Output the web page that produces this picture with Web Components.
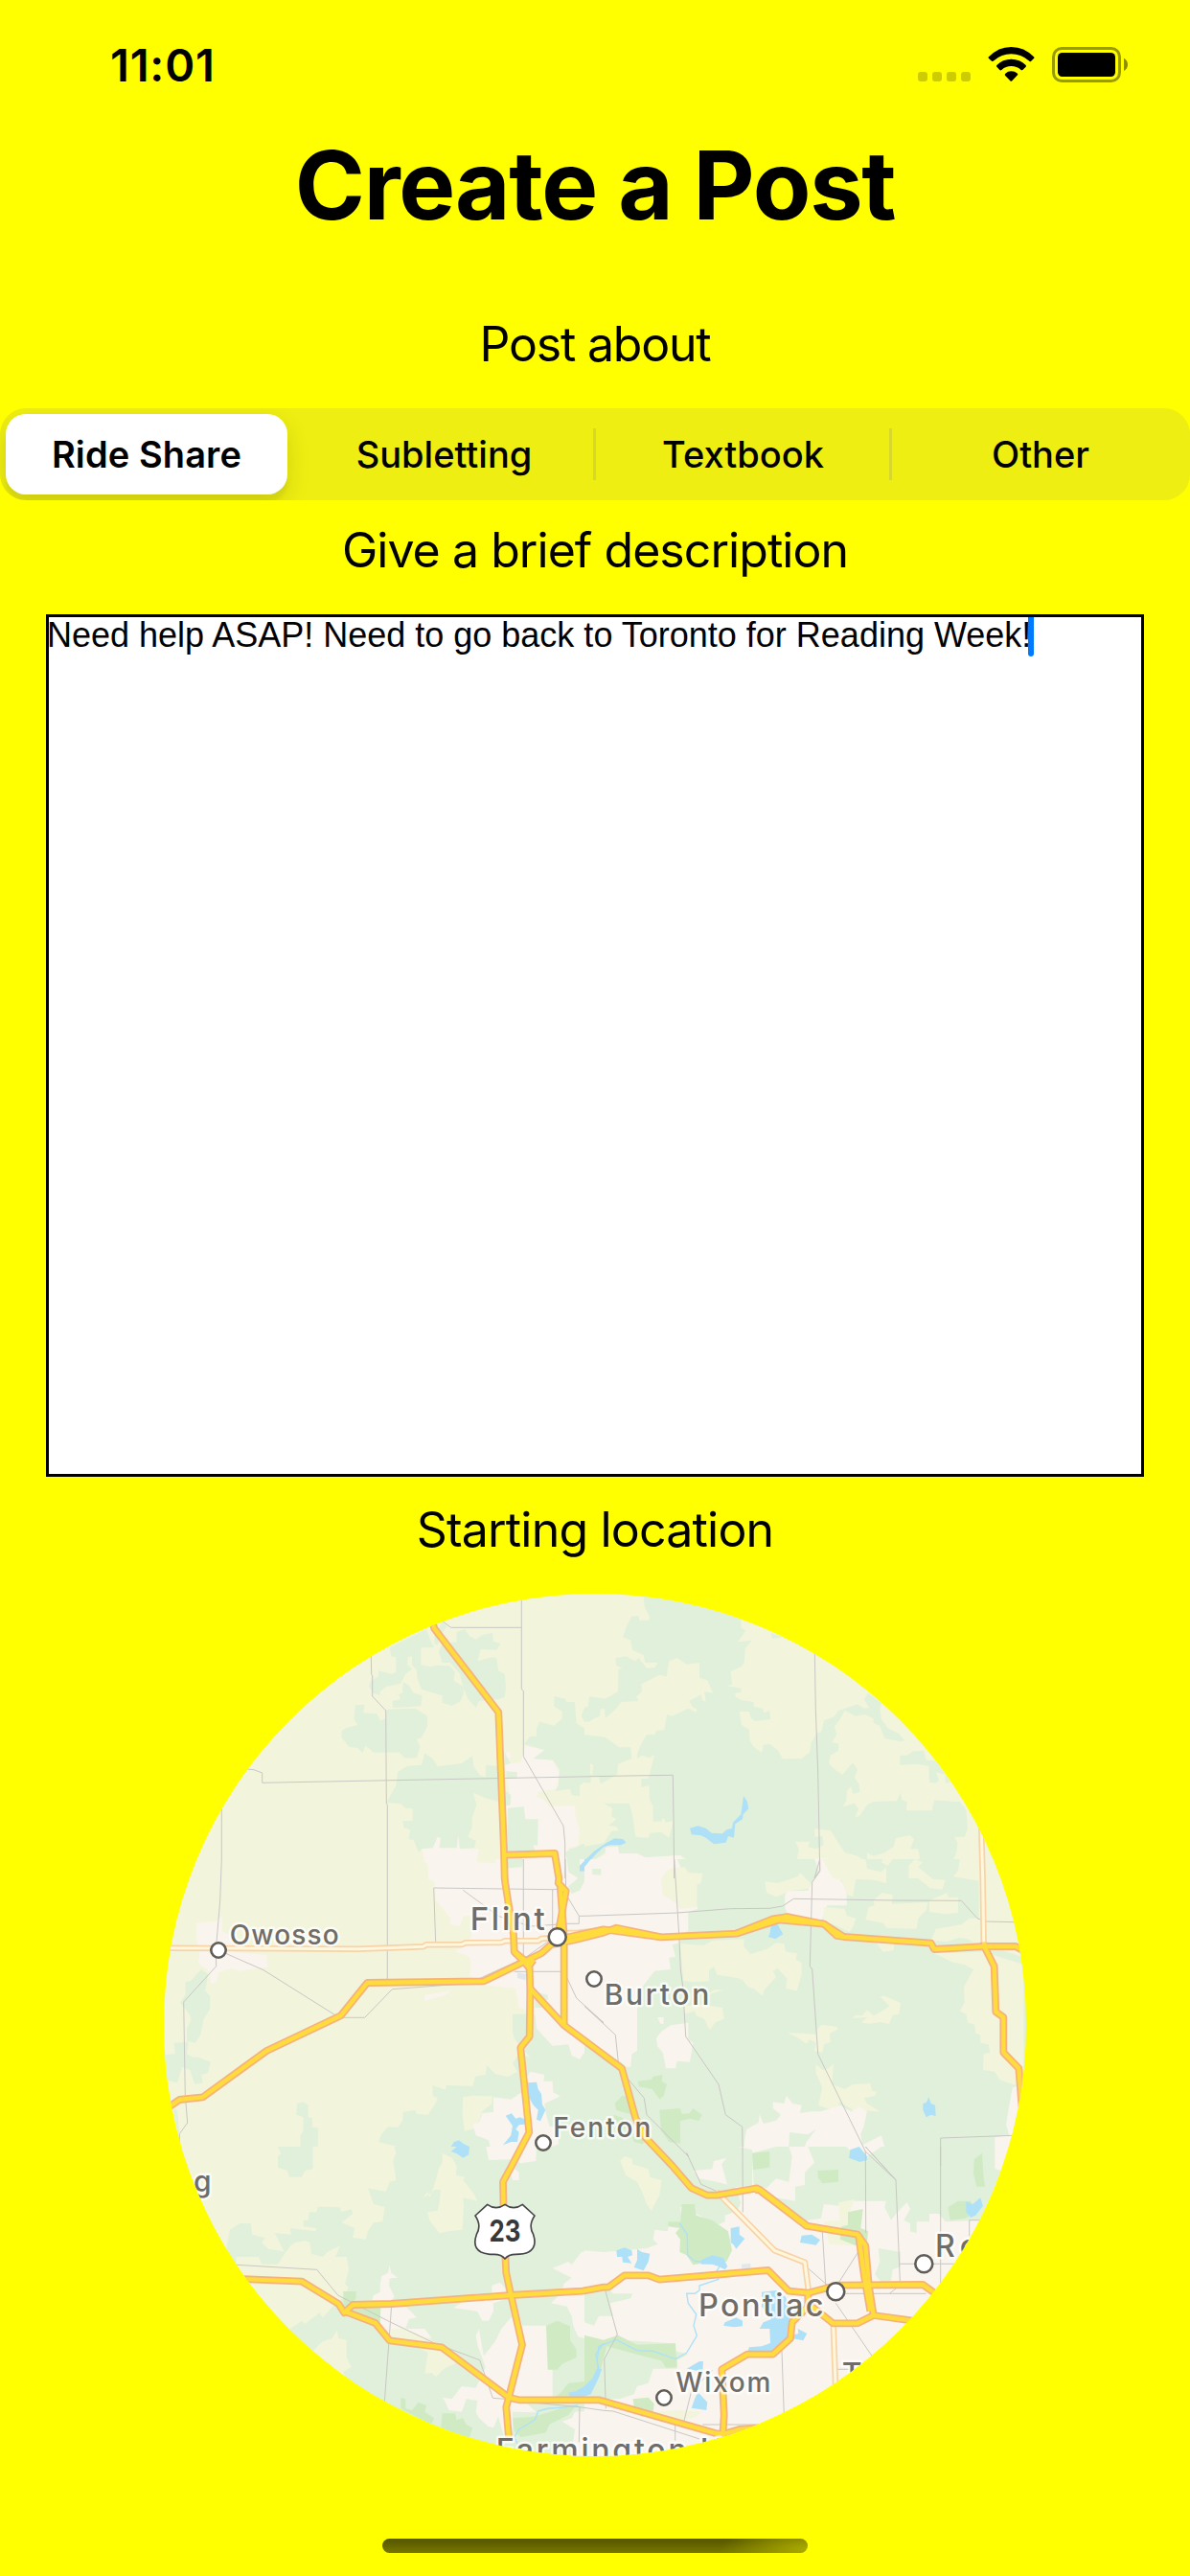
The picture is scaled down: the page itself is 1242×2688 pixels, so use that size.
<!DOCTYPE html>
<html lang="en">
<head>
<meta charset="utf-8">
<title>Create a Post</title>
<style>
html,body{margin:0;padding:0;background:#ff0}
body{width:1242px;height:2688px;overflow:hidden;font-family:Inter,"Liberation Sans",sans-serif;color:#000}
</style>
</head>
<body>
<post-screen></post-screen>
<script>
const define = (name, html, setup) => customElements.define(name, class extends HTMLElement {
  constructor() {
    super();
    const t = document.createElement('template');
    t.innerHTML = html;
    this.attachShadow({mode: 'open'}).appendChild(t.content.cloneNode(true));
  }
  connectedCallback() { if (setup) setup(this, this.shadowRoot); }
});

define('status-bar', `
<style>
:host{display:flex;justify-content:space-between;align-items:flex-start;height:136px;box-sizing:border-box;padding:38px 65px 0 115px}
.time{font-size:47px;line-height:60px;font-weight:600;letter-spacing:.8px}
svg{display:block;margin-top:11px}
</style>
<span class="time"><slot></slot></span>
<svg width="219" height="37" viewBox="958 49 219 37">
 <g fill="#cc0"><rect x="958" y="75" width="10" height="10" rx="3"/><rect x="973" y="75" width="10" height="10" rx="3"/><rect x="988" y="75" width="10" height="10" rx="3"/><rect x="1003" y="75" width="10" height="10" rx="3"/></g>
 <g transform="translate(900 20) scale(.33333)">
  <path d="M396 118 Q426 87 466 87 Q507 87 537 118 Q540 121 537 123 L528 132 Q525 134 521 130 Q497 109 466 109 Q436 109 412 130 Q408 134 405 131 L396 123 Q393 120 396 118Z"/>
  <path d="M421 144 Q440 125 466 125 Q493 125 512 144 Q514 147 512 149 L502 159 Q499 161 496 158 Q484 147 466 147 Q449 147 437 158 Q433 162 430 159 L421 149 Q419 147 421 144Z"/>
  <path d="M448 170 Q456 163 466 163 Q478 163 486 170 Q488 173 486 175 L469 193 Q466 196 463 193 L447 176 Q445 173 448 170Z"/>
  <rect x="598.500" y="91.500" width="207" height="102" rx="26" fill="none" stroke="#000" stroke-opacity=".4" stroke-width="9"/>
  <rect x="612" y="105" width="180" height="75" rx="14"/>
  <path d="M819 122 Q831 129 831 142 Q831 156 819 162Z" fill-opacity=".45"/>
 </g>
</svg>`);

define('screen-title', `
<style>:host{display:block;text-align:center;font-size:99px;line-height:120px;font-weight:700;letter-spacing:-1.25px}</style><slot></slot>`);

define('field-label', `
<style>:host{display:block;text-align:center;font-size:50px;line-height:60px;letter-spacing:-.95px}</style><slot></slot>`);

define('segment-item', `
<style>
:host{display:flex;flex:1;height:84px;align-items:center;justify-content:center;font-size:38px;font-weight:450;border-radius:21px;box-sizing:border-box}
:host([divided])::after{content:"";width:3px;height:54px;background:#d8d82a;position:absolute;right:-1px;top:15px}
:host([divided]){position:relative}
:host([selected]){flex:none;width:294px;margin-right:6px;letter-spacing:.1px;background:#fff;font-weight:600;box-shadow:0 9px 24px rgba(0,0,0,.12),0 9px 3px rgba(0,0,0,.04)}
:host(.w2){flex:none;width:315px}
:host(.w3){flex:none;width:309px}
</style><slot></slot>`);

define('segmented-control', `
<style>:host{display:flex;height:96px;box-sizing:border-box;padding:6px 0 6px 6px;background:#eeee12;border-radius:27px;overflow:hidden}</style><slot></slot>`);

define('text-box', `
<style>
:host{display:flex;box-sizing:border-box;width:1146px;height:900px;margin:0 auto;border:3px solid #000;background:#fff;font:36px/38px "Liberation Sans",Arial,sans-serif}
.t{margin-left:-2px;white-space:pre}
i{width:6px;height:41px;background:#007aff;border-radius:0 0 3px 3px;margin-left:-3px}
</style><span class="t"><slot></slot></span><i></i>`);

define('home-indicator', `
<style>:host{display:block;width:444px;height:15px;margin:0 auto;border-radius:8px;background:radial-gradient(ellipse 90px 30px at 100% 75%,#aaaa00,rgba(170,170,0,0)),linear-gradient(#545400,#787800)}</style>`);

/* Map geometry: each region letter sets the origin of a grid with a third-of-a-pixel unit. */
const ORIGIN = {A:[160,1650,1350,870],B:[610,1650,1440,870],C:[160,1940,1350,900],D:[610,1940,1440,900],E:[160,2240,1350,1020],F:[610,2240,1440,1020]};
const pts = s => {
  let o = ORIGIN.A, out = [];
  for (const k of s.trim().split(/\s+/)) {
    if (ORIGIN[k]) { o = ORIGIN[k]; continue; }
    const [x, y] = k.split(',').map(Number);
    out.push((o[0] + x / 3).toFixed(1) + ',' + (o[1] + y / 3).toFixed(1));
  }
  return out.join(' ');
};
const G='#e1f0da', Y='#f3f4dc', U='#f9f4ed', P='#d0ebc4', W='#aee1f8', I='#e2e7ea';
const LAND = {
A:[[Y,'0,0 1350,0 1350,870 0,870'],
[G,'740,207 855,150 868,185 880,208 838,208 838,262 870,268 885,263 928,265 945,285 940,310 970,330 972,350 962,375 935,390 905,380 905,358 860,345 840,338 825,300 825,280 810,262 810,235 797,237 795,260 810,275 790,290 775,320 730,330 710,345 710,358 688,350 675,330 680,312 705,298 705,280 745,290 760,285 760,238 745,235'],
[G,'880,163 905,128 920,142 905,160 890,200 880,195'],
[G,'950,160 975,150 990,172 1010,182 1030,168 1062,162 1065,188 1088,195 1075,215 1025,213 1015,250 1060,238 1075,240 1080,280 1100,290 1104,330 1100,362 1080,370 1050,372 1020,375 1010,395 985,368 970,330 960,290 930,255 905,255 893,220 905,195 950,190'],
[G,'782,315 800,325 815,350 842,358 838,390 775,395 750,395 748,375 775,370 768,355 780,350'],
[G,'632,388 662,386 658,412 700,415 710,435 725,432 730,402 765,400 820,398 858,422 858,455 840,490 825,495 835,518 825,552 790,554 770,536 690,536 665,515 655,537 640,522 612,518 590,490 590,468 605,458 640,450 628,432'],
[G,'765,598 795,578 840,575 850,538 875,555 890,580 965,570 1000,546 1003,580 1025,610 1040,612 1042,575 1085,580 1090,692 1045,680 1002,662 1012,700 998,742 998,770 985,800 1010,812 1005,835 960,838 840,840 830,848 815,810 800,808 805,778 785,772 780,750 812,750 812,712 790,710 775,697 730,693 745,665 760,640'],
[U,'1100,575 1120,570 1150,568 1165,515 1225,530 1210,545 1190,555 1250,560 1272,600 1262,650 1205,660 1200,675 1220,680 1240,705 1320,703 1322,735 1335,775 1330,828 1300,835 1295,870 850,870 840,838 875,835 890,800 900,805 895,835 950,835 955,795 960,838 1020,838 1012,880 1090,880 1085,690 1120,700'],
[U,'1103,535 1118,535 1118,555 1103,550'],
[G,'1105,595 1140,598 1138,615 1105,618'],[G,'1100,535 1118,570 1100,575'],[G,'1090,645 1120,670 1118,700 1095,705'],
[G,'1110,710 1160,706 1165,745 1205,745 1203,828 1190,825 1195,845 1110,848'],[G,'1105,868 1155,866 1155,870 1105,870'],
[G,'1160,510 1180,485 1200,485 1200,460 1210,440 1255,452 1280,430 1280,408 1255,392 1255,360 1290,368 1295,378 1320,378 1325,445 1352,462 1360,620 1335,640 1335,672 1310,670 1305,650 1258,657 1268,640 1272,590 1252,560 1190,555 1225,528'],
[G,'1365,360 1410,370 1410,395 1385,400 1375,440 1350,442 1340,420 1348,400 1366,395'],
[G,'1305,838 1320,835 1345,822 1410,825 1410,870 1295,870 1290,850'],
[W,'1410,828 1370,855 1335,885 1335,908 1350,900 1370,875 1410,848']],
B:[[Y,'0,0 1440,0 1440,870 0,870'],
[G,'185,47 250,50 400,85 490,118 490,145 505,155 480,190 525,185 503,210 500,255 490,268 458,282 462,322 448,328 492,335 490,348 472,350 472,362 492,372 530,378 530,392 558,398 562,412 580,405 583,432 535,438 522,430 515,408 485,408 492,450 515,463 518,500 530,518 555,537 560,512 580,510 605,528 620,556 680,555 705,535 710,505 728,475 742,472 750,435 780,425 795,405 855,385 875,398 892,395 875,370 888,350 930,382 925,400 930,432 950,460 985,478 1002,498 990,502 940,492 925,452 905,445 905,430 878,418 848,422 815,405 800,432 783,455 790,480 775,505 795,508 795,530 770,545 765,570 785,590 808,605 840,568 855,590 845,615 860,635 862,660 840,665 835,642 822,655 820,688 808,706 845,695 858,712 848,738 862,735 885,700 905,690 978,688 990,660 993,685 1010,690 1008,718 1088,718 1095,685 1160,690 1175,690 1195,715 1200,775 1190,800 1158,800 1168,818 1165,850 1155,870 1050,870 1045,838 1020,838 1032,808 1020,795 975,805 968,830 940,850 905,860 885,850 885,880 855,860 815,850 770,780 720,775 722,800 745,797 750,825 725,838 700,832 705,815 660,815 672,840 665,870 320,870 300,858 190,865 165,852 108,855 105,830 70,830 65,850 35,870 0,870 0,830 60,820 85,782 108,780 100,768 75,765 100,745 85,735 88,710 60,695 140,695 150,730 160,800 200,803 205,788 240,785 265,803 278,750 255,755 248,740 240,752 215,752 215,705 203,682 203,640 178,645 178,618 200,618 215,560 218,542 205,553 180,545 165,555 165,540 180,505 195,480 220,480 225,468 250,465 258,418 275,422 325,398 350,410 352,400 340,395 328,375 365,355 370,375 380,375 375,345 402,350 385,310 360,303 360,255 320,260 290,240 265,250 257,298 235,293 178,322 180,345 162,362 170,375 115,378 100,398 65,430 62,398 50,400 48,422 25,432 15,440 0,440 0,395 12,392 15,360 65,368 105,345 106,275 120,272 100,265 97,240 130,235 160,250 170,240 195,272 220,270 230,255 190,255 185,232 150,215 145,185 120,175 132,140 148,110 170,108 172,122 200,122 205,112 188,80'],
[G,'0,480 65,488 108,520 145,520 148,555 105,572 102,605 50,635 45,612 20,610 20,632 0,630'],
[Y,'18,570 28,575 25,605 18,605'],
[G,'585,162 620,175 588,180'],
[G,'988,545 1010,545 1030,532 1062,530 1070,560 1100,562 1140,620 1145,630 1130,632 1130,605 1102,598 1110,625 1100,632 1080,630 1078,578 1040,572 988,575'],
[U,'35,870 65,855 65,835 105,830 108,852 165,852 190,865 300,858 325,890 320,900 0,900'],
[U,'715,880 725,868 765,868 780,900 715,900'],
[W,'70,818 95,805 122,808 130,818 115,826 80,826 60,832 35,855 0,895 0,875 30,845'],
[W,'330,773 355,766 380,773 398,788 432,790 445,778 462,773 465,755 490,730 498,672 510,690 514,712 497,730 495,745 472,760 468,803 450,798 443,818 405,823 380,803 365,796 335,793']],
C:[[Y,'0,0 1350,0 1350,900 0,900'],
[U,'845,0 860,20 860,62 880,70 885,130 915,165 930,185 930,205 960,210 970,180 995,175 995,240 990,255 945,290 990,305 995,330 990,365 1040,385 1010,400 935,410 915,425 850,443 850,425 1035,395 1135,405 1145,465 1165,470 1170,485 1195,485 1200,530 1250,585 1300,580 1300,612 1335,627 1410,620 1410,0'],
[Y,'1015,0 1070,0 1070,12 1015,10'],[G,'1110,0 1158,0 1155,25 1110,28'],
[U,'135,200 195,195 215,178 215,225 245,240 250,290 355,300 358,338 300,345 270,350 245,342 205,355 198,385 180,388 175,350 140,325 145,300 135,250'],
[G,'1295,0 1410,0 1410,60 1375,50 1360,50 1335,98 1310,108 1300,85 1330,60 1300,40'],[U,'1335,0 1350,0 1350,40 1335,38'],
[W,'1335,20 1355,0 1370,0 1350,38 1335,38'],
[G,'1195,415 1235,425 1235,440 1220,440 1230,465 1195,465'],[I,'1140,355 1168,360 1165,378 1140,372'],
[G,'150,345 172,360 163,412 178,430 177,470 158,500 148,550 132,575 105,570 105,530 118,505 115,488 85,450 100,425 100,385 118,380'],
[G,'65,575 110,572 105,610 125,620 142,620 180,635 170,670 150,675 155,700 130,705 115,660 90,650 75,700 40,692 35,612 68,610'],
[G,'62,780 75,785 82,860 75,850'],
[G,'450,765 470,760 485,770 485,808 498,810 498,838 517,842 515,900 400,900 460,905 460,865 470,850 470,808 448,800'],
[G,'765,900 705,885 715,860 735,838 765,840 780,820 782,792 820,785 825,798 860,800 885,762 890,748 875,740 875,708 915,722 918,708 1000,710 1008,680 1040,675 1045,645 1070,672 1110,682 1140,665 1125,640 1145,610 1180,620 1140,575 1130,560 1125,540 1125,485 1165,485 1195,490 1200,530 1250,585 1300,580 1310,615 1335,627 1350,605 1350,900'],
[Y,'970,745 1000,740 1062,742 1060,765 1030,790 1020,820 1015,840 975,852 968,800'],
[U,'1000,830 1020,825 1030,795 1065,792 1065,745 1120,752 1145,735 1160,730 1165,690 1180,665 1225,675 1222,695 1250,695 1252,730 1275,742 1225,765 1228,788 1240,835 1260,840 1270,890 1250,900 1055,900 1050,880 1010,865'],
[W,'1168,700 1200,698 1205,720 1215,735 1218,768 1228,785 1212,820 1200,815 1205,785 1190,770 1175,745'],
[W,'1103,803 1122,796 1135,812 1148,808 1165,815 1165,830 1145,832 1135,845 1145,855 1140,885 1120,885 1095,895 1120,865 1125,835'],
[W,'942,885 958,880 970,890 990,900 970,900 932,900']],
D:[[G,'0,0 1440,0 1440,900 0,900'],
[U,'0,0 290,0 330,90 355,155 325,165 325,225 298,235 298,262 275,268 285,305 265,308 270,345 220,350 165,420 165,600 148,610 145,650 130,650 115,635 0,570'],
[G,'218,380 240,375 275,350 298,345 310,400 250,420 165,490 180,420 218,405'],
[G,'25,30 52,30 52,50 25,48'],[W,'0,0 20,0 0,25'],
[Y,'275,28 315,25 325,42 370,45 365,75 352,80 352,150 300,155 285,138 245,110 240,65 255,38'],
[Y,'565,70 605,75 668,55 675,42 708,75 705,92 650,98 600,118 570,105'],
[U,'627,115 635,100 700,98 712,75 735,40 720,0 775,0 800,65 820,90 822,145 760,145 740,200 700,205 638,180 628,150'],
[Y,'745,0 880,0 885,30 930,40 945,25 945,75 905,65 850,62 840,118 822,110 805,65 778,60'],
[Y,'935,0 965,0 950,20 930,10'],[Y,'1015,20 1035,0 1058,10 1045,25 1090,62 1130,65 1120,95 1082,90 1045,60 1015,60'],
[Y,'1155,55 1170,35 1175,0 1440,0 1440,330 1250,265 1235,270 1200,250 1175,245 1135,258 1085,255 1100,218 1180,205 1205,185 1235,185 1235,68'],
[Y,'890,150 908,145 905,128 932,105 965,112 962,140 1075,135 1070,160 1045,185 1040,218 945,215 935,200 880,190'],
[Y,'750,150 815,155 822,178 850,185 842,210 830,228 748,190'],
[Y,'1080,130 1135,105 1140,120 1170,120 1170,168 1130,172 1080,165'],
[Y,'912,260 970,258 968,285 935,290'],
[Y,'300,265 375,270 400,255 500,250 498,272 520,298 570,282 600,262 625,265 630,290 665,295 662,315 680,325 680,360 665,412 630,405 635,375 605,342 590,350 600,370 578,392 562,410 558,428 530,405 512,400 495,378 480,372 415,362 405,335 390,348 390,382 340,385 310,380'],
[W,'580,235 585,205 605,205 622,235 598,250 575,243'],
[Y,'310,460 370,455 432,465 437,500 410,510 392,535 375,500 350,490 345,475 312,485'],
[Y,'375,430 408,408 435,410 400,420'],
[Y,'1095,295 1250,290 1375,330 1375,710 1340,705 1300,690 1285,665 1248,660 1250,610 1270,605 1265,580 1240,575 1240,550 1225,545 1222,518 1200,512 1195,485 1175,475 1190,450 1188,400 1218,345 1190,330 1150,322'],
[Y,'925,430 940,428 990,450 985,485 965,488 955,515 925,510 895,515 868,512 885,495 838,498 850,488 870,490 885,472 905,490 925,480 955,460'],
[Y,'635,542 725,548 730,530 742,518 793,525 790,535 768,545 770,572 750,580 745,605 720,600 725,575 705,565 695,578 670,560'],
[Y,'725,642 745,660 765,655 780,640 775,705 815,720 840,705 895,702 900,725 915,728 910,740 875,748 885,765 925,790 840,785 800,760 785,790 732,770 745,715 725,670'],
[U,'228,495 248,495 248,515 238,515'],[U,'225,560 240,540 270,520 325,512 325,565 340,575 330,635 290,632 285,655 255,655 245,605 228,585'],
[P,'167,695 210,690 215,680 245,675 242,695 258,705 248,740 235,752 212,720 170,712'],
[P,'95,765 118,740 150,745 160,800 130,795 100,785'],[P,'90,800 120,810 130,840 115,850'],
[P,'235,785 300,780 305,798 330,795 340,780 368,800 358,820 330,812 300,820 300,890 265,885 240,850'],
[P,'150,870 210,870 180,892 155,885'],
[U,'500,885 508,845 545,825 548,798 560,828 600,818 615,800 590,780 590,760 625,765 632,740 652,765 680,770 675,795 710,790 740,790 800,770 835,790 860,775 885,790 875,835 865,860 870,895 930,865 940,900 500,900'],
[G,'640,900 642,855 700,862 725,845 695,885 690,900'],
[U,'1340,715 1390,700 1390,900 1285,900 1285,870 1330,865 1320,830 1330,770'],
[W,'1060,765 1070,762 1078,745 1085,765 1098,770 1100,805 1085,800 1070,808 1060,785']],
E:[[G,'0,0 1350,0 1350,1020 0,1020'],
[Y,'0,0 390,0 400,20 390,30 390,65 420,75 425,95 465,95 475,75 500,70 500,0 755,0 760,20 750,45 755,70 760,105 740,110 728,140 672,130 690,180 725,190 718,235 690,238 672,265 665,290 625,285 630,255 590,238 625,210 620,195 588,205 585,190 515,188 510,205 488,205 485,230 470,230 470,250 510,255 508,265 428,255 432,275 380,270 390,290 400,310 410,328 360,320 340,300 350,285 310,275 305,240 270,240 240,260 230,310 230,350 290,410 0,410'],
[Y,'260,345 330,345 340,368 390,368 415,330 430,310 445,300 475,295 490,300 495,335 530,345 545,330 585,310 570,345 605,345 612,385 600,430 610,440 600,470 575,485 545,520 530,535 520,520 475,555 465,545 415,580 260,430'],
[Y,'500,640 530,610 560,600 575,575 580,600 605,605 605,660 620,690 595,705 600,720'],
[Y,'845,160 858,140 865,160 880,120 895,65 905,50 905,20 935,35 950,60 948,90 975,95 970,105 990,130 1005,150 1015,170 970,160 972,190 968,260 925,265 895,270 865,230 858,205 890,200 895,180 900,135 880,135 870,145'],
[U,'1042,0 1200,0 1198,45 1150,52 1130,40 1050,42'],[W,'932,15 950,0 990,0 988,25 970,35 950,22'],
[U,'1118,85 1130,68 1145,80 1145,105 1125,105'],
[U,'710,430 715,405 735,395 740,372 745,395 765,410 740,412 738,435 755,470 735,490 685,480 690,465 710,455'],
[U,'710,490 780,490 825,535 800,540 790,570 850,570 872,600 720,590 708,570'],
[Y,'725,575 780,568 860,600 920,635 950,655 945,680 920,690 905,700 885,720 872,708 850,710 860,645 800,615 735,605'],
[U,'940,505 975,480 1005,480 1010,460 1060,460 1060,435 1085,425 1100,440 1110,475 1065,490 1065,515 1050,545 1030,545 1015,515'],
[U,'1020,570 1030,630 1035,655 1070,610 1090,570 1120,535 1150,540 1155,560 1230,560 1235,600 1250,690 1250,785 1150,785 1200,832 1125,830 1125,880 1120,910 1100,915 1080,845 1065,880 1048,875 1020,850 1010,830 1015,795 980,790 970,820 965,830 925,825 915,800 905,785 935,790 965,750 1010,755 1040,690 1015,620 1010,590'],
[U,'1250,380 1300,360 1310,370 1340,330 1410,320 1410,600 1370,580 1365,605 1330,595 1315,560 1310,530 1295,500 1245,490 1280,455 1285,430 1310,410 1285,398'],
[P,'1230,560 1265,545 1305,562 1305,605 1325,635 1325,660 1280,680 1265,698 1235,698'],
[P,'595,453 635,453 635,475 622,490 670,490 712,505 710,555 680,550 600,515 595,495'],
[P,'775,785 790,790 790,820 810,825 830,800 855,810 850,830 880,850 870,870 775,820'],
[P,'905,835 945,835 950,855 970,850 980,870 1000,880 990,910 960,910 925,890 900,880'],
[P,'1280,765 1300,740 1350,735 1350,800 1240,800'],[P,'1125,850 1190,845 1260,825 1290,810 1320,815 1300,840 1240,870 1230,895 1150,910 1130,890'],
[W,'1300,770 1325,765 1365,740 1375,710 1395,695 1395,740 1340,790 1305,785'],
[U,'1280,860 1310,850 1320,830 1410,825 1410,1020 1300,1020 1320,885']],
F:[[U,'0,0 1440,0 1440,1020 0,1020'],
[G,'0,0 480,0 525,10 525,120 450,130 430,55 445,35 405,45 400,70 340,75 360,100 415,110 470,125 490,175 480,200 440,215 440,235 405,250 380,225 350,210 340,185 300,190 305,235 265,240 260,265 220,260 215,290 230,305 195,318 60,330 0,325'],
[Y,'112,45 125,30 150,38 150,55 200,70 205,95 242,105 235,150 210,200 195,180 180,140 165,110 130,90'],
[G,'525,20 600,0 640,0 650,30 640,110 600,100 570,130 530,120'],
[P,'525,20 580,15 580,65 528,72'],
[G,'700,0 820,0 865,45 930,0 1285,0 1285,70 1330,80 1300,180 1260,220 1245,230 1130,235 1110,210 1080,210 1080,235 1040,235 1040,270 1020,265 1020,240 1000,230 1020,195 1010,175 980,205 960,230 940,190 945,170 820,170 800,185 750,180 740,225 700,230 680,250 620,190 600,180 600,160 660,170 660,125 690,120 690,80 720,50'],
[P,'730,75 795,72 795,110 745,115 732,98'],[P,'1220,40 1245,20 1250,100 1255,125 1228,125 1218,85'],
[P,'1138,190 1170,170 1210,170 1220,210 1190,225 1145,230'],
[W,'832,10 860,0 885,30 885,42 862,48 828,35'],[W,'1195,172 1215,180 1240,160 1248,185 1225,215 1210,222 1195,205'],
[Y,'795,175 845,165 830,205 870,200 865,260 840,310 765,305 760,270 750,235 800,230'],
[P,'825,205 872,195 865,255 888,265 885,300 850,310 800,290 805,250 825,245'],
[P,'305,180 345,180 350,215 400,230 450,265 462,325 445,360 400,360 340,370 320,340 298,330 300,290 285,270 298,255 262,250 262,235 300,235'],
[G,'920,318 990,330 990,375 965,385 960,420 930,425 910,400 925,360'],
[G,'0,440 60,430 90,460 150,460 145,475 80,490 90,530 45,530 30,560 0,550'],
[G,'0,670 40,640 70,600 120,605 260,615 285,640 325,650 290,668 290,695 215,695 200,740 165,750 155,775 110,790 50,790 0,790'],
[P,'0,590 60,605 105,590 165,620 285,615 290,690 255,692 240,670 180,655 70,625 50,700 30,750 0,780'],
[P,'152,790 200,785 218,805 215,830 190,828 155,815'],
[Y,'215,830 300,825 365,830 350,845 300,858 210,850'],
[W,'100,325 125,316 148,325 150,340 135,345 148,365 120,362 118,345 102,345'],
[W,'165,320 180,330 205,335 200,360 185,388 155,378 165,355'],
[W,'365,355 400,340 435,348 448,375 440,385 420,375 400,368 365,368'],
[W,'458,255 485,250 485,275 502,288 475,320 468,308 458,300'],
[W,'680,278 712,275 738,292 725,308 675,300'],[I,'492,368 520,365 520,380 492,380'],
[W,'440,550 475,535 495,545 495,562 470,565 435,560'],
[W,'555,455 600,450 630,470 650,540 645,600 610,620 585,640 512,640 515,628 555,625 582,615 580,570 548,570 560,550 585,540 555,500'],
[W,'650,590 670,585 668,570 697,585 685,607 650,600'],[W,'655,510 690,515 690,530 655,545'],
[W,'320,695 360,672 372,672 370,705 345,700'],[W,'345,790 355,768 385,800 382,825 335,818'],
[W,'0,750 25,725 38,695 55,695 42,730 20,775 0,782']]
};
const GREY = ['A 905,125 932,145 1153,145','A 1153,55 1153,338 1159,343 1159,548 1284,766 1289,820 1289,930','A 682,232 683,293 686,295 686,360 728,405 730,695 733,700 C 733,0 733,380','A 293,588 315,590 341,600 341,631 B -1008,631 135,609 277,607 279,743 281,930 D 281,0 296,235 301,345 308,400 317,555 420,705 442,800 494,838 F 495,0 496,205',
'A 214,712 C 214,0 209,130 196,285 197,335 95,447 100,740 107,825 82,860 82,890','B 721,225 724,400 731,600 737,905 720,930 D 737,0 737,38 713,72 706,335 713,345 731,610 880,915 975,1005 F 880,0 975,104 988,420','D 880,915 F 880,15 881,270',
'C 884,262 878,90 1255,95 1270,93','C 970,97 1080,178 1180,210 1260,205','C 1159,0 1159,300','C 1250,95 1250,220','C 1290,0 1292,110 1333,178 D 0,178 290,168 457,155 580,154 620,147 655,124 968,129 1180,130 1230,185 1255,195 1350,197','C 1260,202 1333,202 1333,178','C 204,285 345,347 582,496 662,496 748,407 1035,385','C 1018,375 1165,308 1240,255','C 1130,352 1286,352 1325,435 1410,512 D 0,460 97,550 108,655 187,748 195,800 325,930 F 320,20 365,118 415,140','D 1115,960 1115,873 1345,865','F 1115,0 1115,440',
'E 260,370 512,385 578,465 740,548 880,615 1022,668 1063,787 1100,790','E 746,495 737,620 724,800','E 1120,795 1335,815 1410,826 F 90,828 360,915','E 1335,815 1333,925','F 65,450 103,588 62,665 67,820','F 284,870 284,920','F 312,858 335,765 400,700','F 370,870 580,870','F 745,265 755,432','F 785,455 690,372','F 787,440 860,325','F 787,490 900,655','F 810,460 1070,460','F 955,460 980,440','F 988,367 1160,367','F 1205,280 1205,230 1245,230','F 618,640 625,840','F 790,697 840,697'];
const STREAM = ['E 1410,615 1385,650 1395,700 1380,740','E 1330,810 1290,815 1235,820 1205,828 1195,855 1145,885 1130,910 1140,930','F 298,240 322,275 323,340 345,358 400,365','F 430,365 410,395 420,415 360,435 360,450 345,460 320,460 325,490 350,525 342,560 352,592 320,645 285,665 215,640 165,638 100,605 45,625 40,670 45,720'];
const LIGHT = ['C 40,278 640,281 845,274 855,268 967,267 977,262 1090,261 1100,256 1205,256 1215,249 1265,245','C 1265,232 1330,230 1410,222','B 1242,755 1247,930 D 1250,265','F 413,140 595,325 690,362 702,455','F 779,553 787,770'];
const HIGH = ['A 872,120 880,148 1081,410 1098,840 1100,930 C 1102,75 1112,140 1128,235 1130,290 1160,320 1178,342 1180,410 1178,555 1150,590 1177,855 1122,960 E 1095,110 1098,260 1105,395 1120,465 1155,620 1113,785 1105,815 1113,910',
'A 1100,857 1257,852 1270,930 C 1268,75 1292,100 1268,230','C 1274,85 1286,240 1286,520','C 1180,405 1286,520 D 117,655 160,810 190,870 275,960 F 335,130 385,152 415,152 540,130 695,248 855,275 880,310 890,432 905,528','F 535,135 550,135 700,250','F 858,275 875,400 895,515',
'C 40,782 82,753 155,745 355,600 587,490 670,387 1035,382 1215,295 1245,268 1320,253 1410,230 D 100,215 240,244 475,233 590,187 635,180 750,203 790,240 812,243 1085,263 1095,282 1252,273 1350,273 1380,290','C 1280,248 1410,220 D 75,222 240,244','D 475,233 610,190 750,203 812,243','C 1130,290 1180,330 1190,315',
'D 1252,260 1252,273 1283,335 1288,478 1312,495 1312,605 1360,655 1370,780','E 270,414 465,422 580,492 598,520 625,495 745,492 1120,465 1345,452 1410,440 F 75,440 125,403 200,403 235,416 575,387 640,452 700,458 790,434 1060,432 1120,475','E 598,515 695,552 740,607 903,628 1113,785 1145,793 1395,793 F 45,793 410,897 435,900 485,885 560,880',
'F 700,458 700,500 650,550 645,600 590,650 510,650 430,697 437,840 433,905','F 700,490 778,553 855,553 905,528 1050,548'];
const DOTS = ['C 204,285 7.7','C 1265,244 9','C 1380,375 7.7','C 1221,888 7.7','F 787,454 9','F 1063,367 9','F 249,786 7.7'];
const NAMES = [['Flint','C 992,222',33,78],['Owosso','C 239,266',28,114],['Burton','D 62,457',30,109.500],['Fenton','C 1252,870',28,102],['Pontiac','F 357,532',32.500,130.500],['Wixom','F 286,768',28,99],['Ro','F 1098,345',32,45],['g','E 126,142',30,18],['T','F 806,748',32,20],['Farmington H','E 1073,984',32,237]];
const line = (list, color, w) => `<g fill="none" stroke="${color}" stroke-width="${w}" stroke-linejoin="round">${list.map(s => `<polyline points="${pts(s)}"/>`).join('')}</g>`;

define('location-map', `<style>:host{display:block;width:900px;height:900px;margin:0 auto;border-radius:50%;overflow:hidden}svg{display:block}text{font-family:Inter,sans-serif}</style><div></div>`, (el, root) => {
  let land = '', defs = '';
  for (const k in LAND) {
    const [ox, oy, w, h] = ORIGIN[k];
    defs += `<clipPath id="c${k}"><rect x="${ox}" y="${oy}" width="${w/3+.3}" height="${h/3+.3}"/></clipPath>`;
    land += `<g clip-path="url(#c${k})">` + LAND[k].map(([c, p]) => `<polygon fill="${c}" points="${pts(k + ' ' + p)}"/>`).join('') + '</g>';
  }
  const dots = DOTS.map(d => { const [k, p, r] = d.split(' '); const [x, y] = pts(k + ' ' + p).split(','); return `<circle cx="${x}" cy="${y}" r="${r}" fill="#fff" stroke="#605d58" stroke-width="2.600"/>`; }).join('');
  const names = NAMES.map(([t, p, s, w]) => { const [x, y] = pts(p).split(','); return `<text x="${x}" y="${y}" font-size="${s}" textLength="${w}" font-weight="550" fill="#706d68" stroke="#fff" stroke-opacity=".75" stroke-width="5" stroke-linejoin="round" paint-order="stroke">${t}</text>`; }).join('');
  root.querySelector('div').innerHTML = `<svg width="900" height="900" viewBox="171 1663 900 900"><defs>${defs}</defs>${land}
  ${line(STREAM, '#aee1f8', 1.4)}${line(GREY, '#c9c7c4', 1)}
  ${line(LIGHT, '#f8d3a8', 6.400)}${line(LIGHT, '#fff7dc', 3)}
  ${line(HIGH, '#f6b27c', 7.800)}${line(HIGH, '#ffdc3c', 4.300)}
  ${names}${dots}
  <g transform="translate(160 2240) scale(.33333)"><path d="M1046 181 Q1073 201 1101 181 Q1128 201 1156 181 L1194 216 Q1173 247 1190 275 Q1203 315 1175 330 Q1162 337 1135 337 Q1112 337 1101 351 Q1090 337 1067 337 Q1040 337 1026 330 Q998 315 1012 275 Q1029 247 1008 216Z" fill="#fff" stroke="#47474a" stroke-width="5" stroke-linejoin="round"/></g>
  <text x="527" y="2339" text-anchor="middle" font-size="31" textLength="33" lengthAdjust="spacingAndGlyphs" font-weight="700" fill="#38383a">23</text></svg>`;
});

define('post-screen', `
<style>
:host{display:flex;flex-direction:column;width:1242px;height:2688px;background:#ff0}
screen-title{margin-top:-3px}
.about{margin-top:76px;letter-spacing:-1.2px}
segmented-control{margin-top:37px}
.desc{margin-top:22px}
text-box{margin-top:37px}
.start{margin-top:25px;letter-spacing:-.8px}
location-map{margin-top:37px}
home-indicator{margin-top:86px}
</style>
<status-bar>11:01</status-bar>
<screen-title>Create a Post</screen-title>
<field-label class="about">Post about</field-label>
<segmented-control><segment-item selected>Ride Share</segment-item><segment-item divided class="w2">Subletting</segment-item><segment-item divided class="w3">Textbook</segment-item><segment-item>Other</segment-item></segmented-control>
<field-label class="desc">Give a brief description</field-label>
<text-box>Need help ASAP! Need to go back to Toronto for Reading Week!</text-box>
<field-label class="start">Starting location</field-label>
<location-map></location-map>
<home-indicator></home-indicator>`);
</script>
</body>
</html>
